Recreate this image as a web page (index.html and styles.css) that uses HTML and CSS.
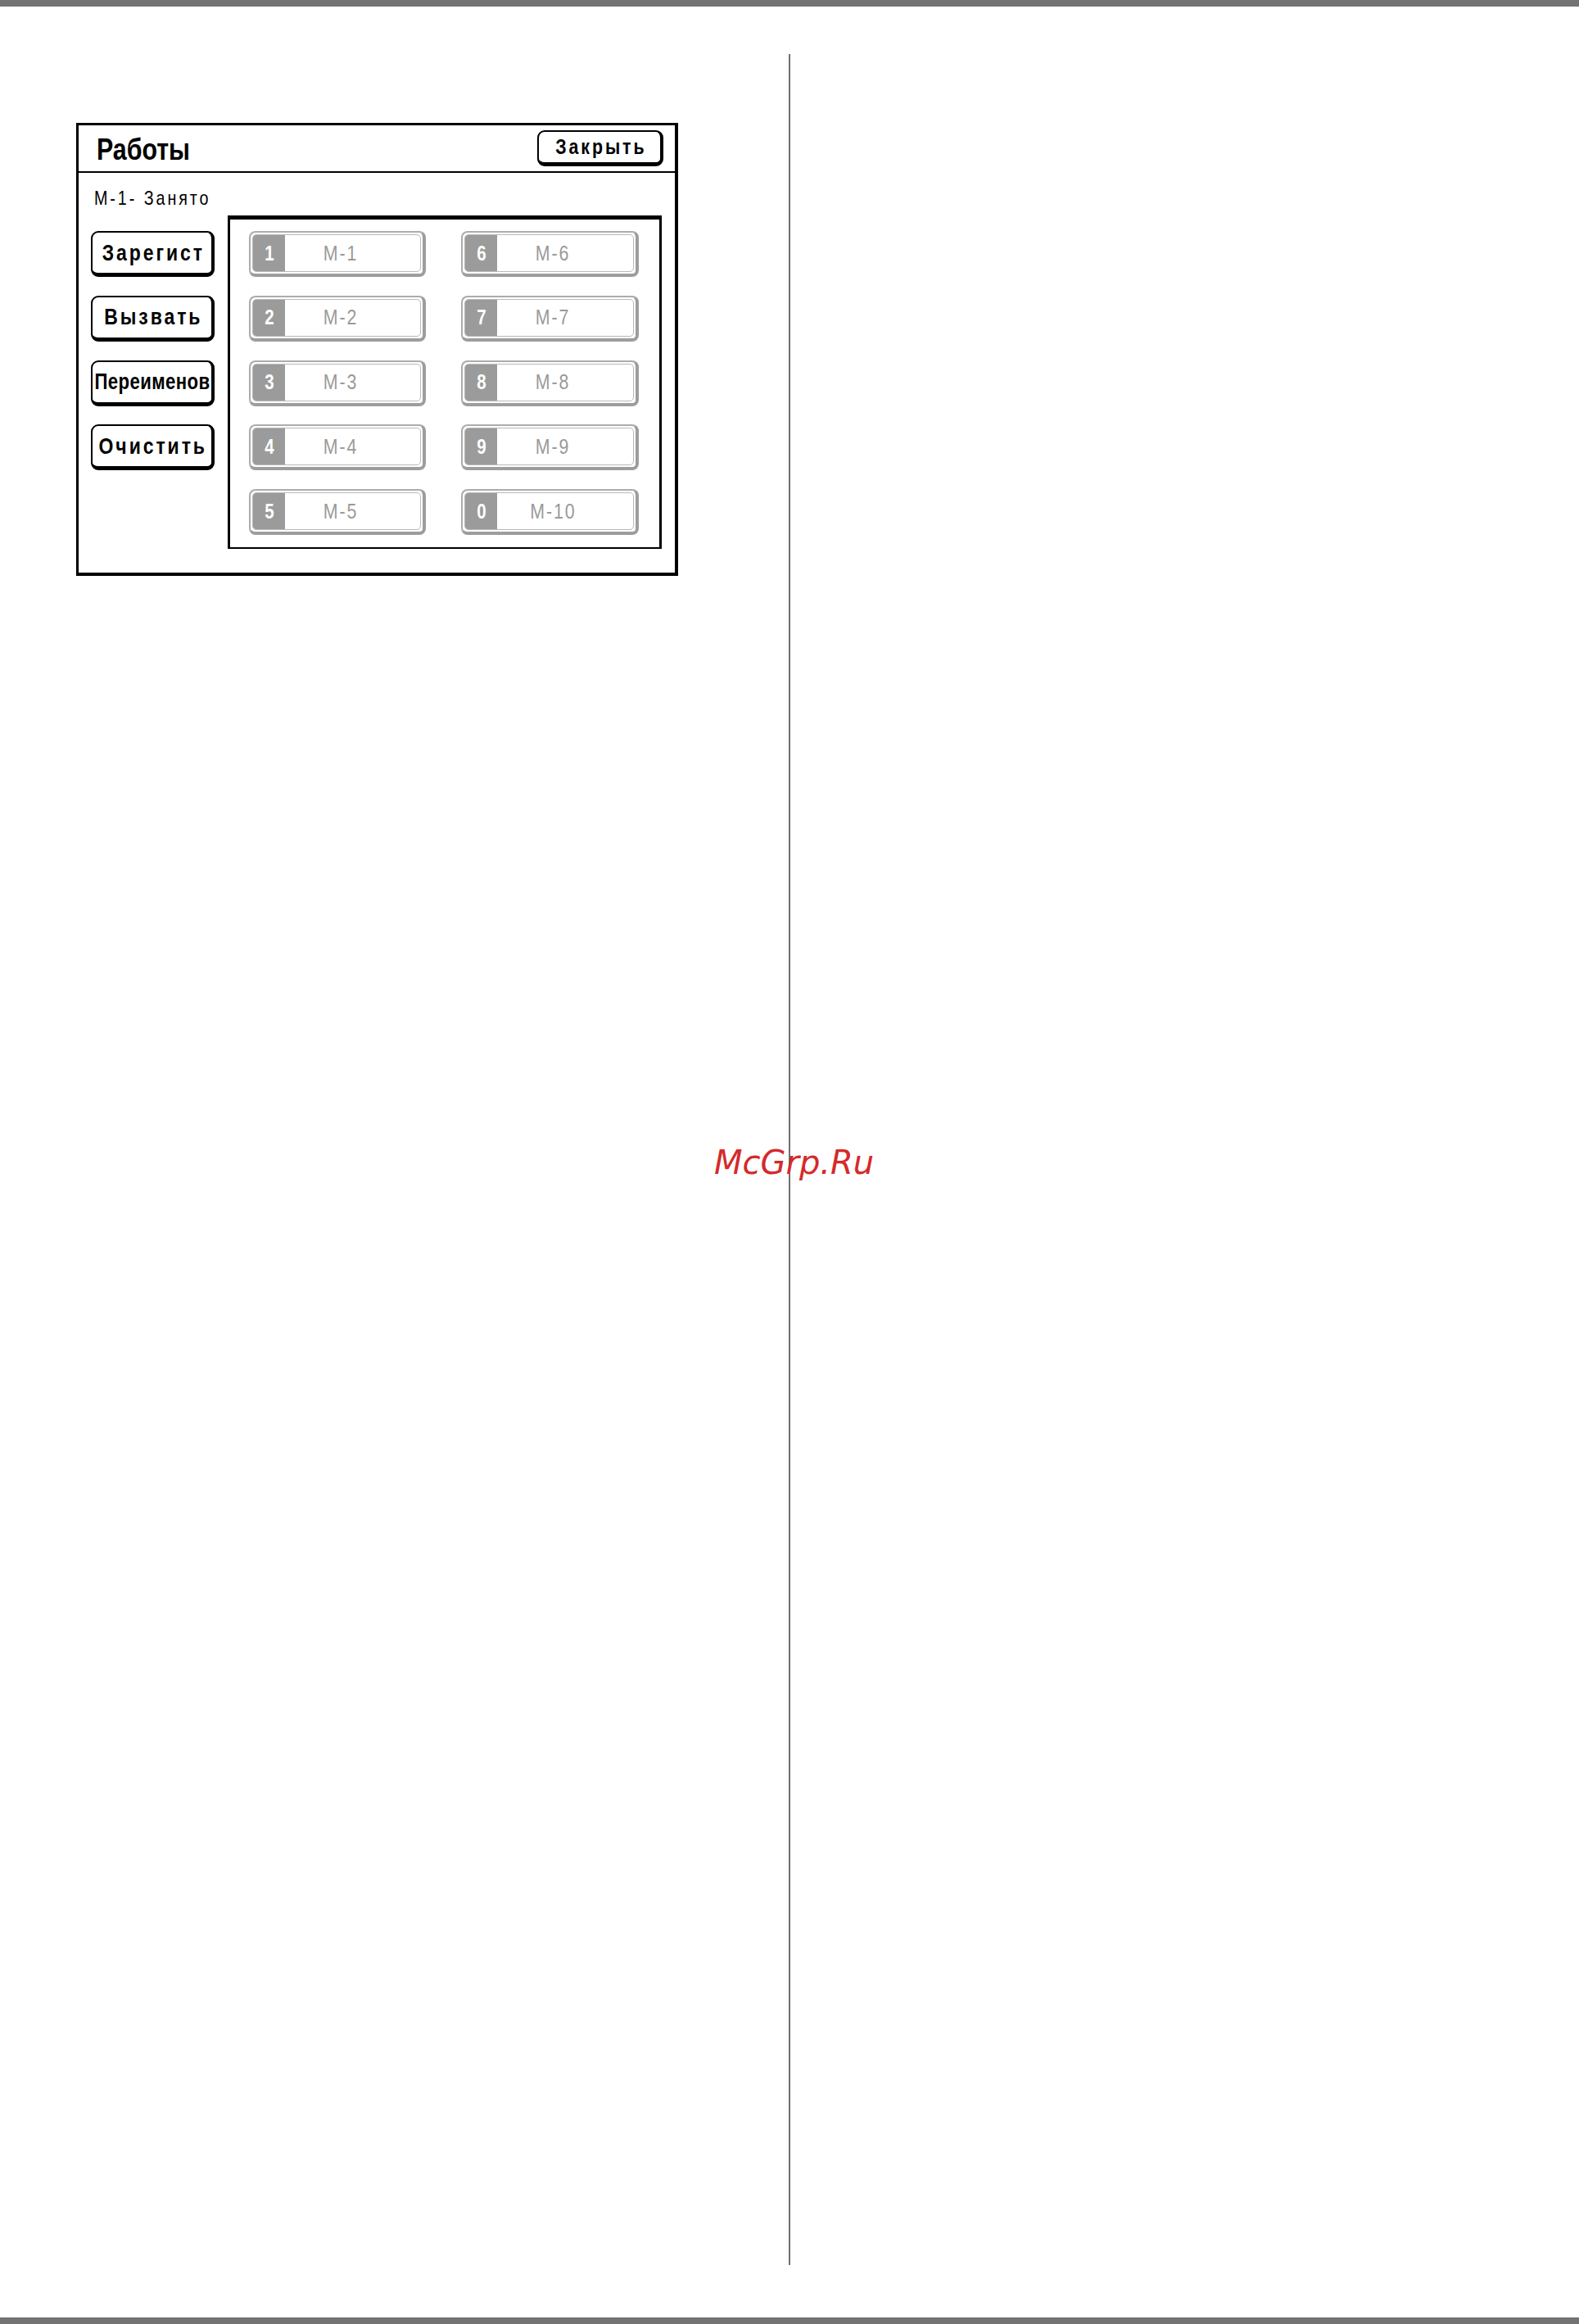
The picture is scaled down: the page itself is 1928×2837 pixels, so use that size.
FILE: index.html
```html
<!DOCTYPE html>
<html lang="ru">
<head>
<meta charset="utf-8">
<title>Работы</title>
<link rel="stylesheet" href="styles.css">
</head>
<body>
<div class="topbar"></div>
<div class="page">
  <div class="leftcol">
    <section class="panel">
      <header class="panel-head">
        <h1 class="title"><span class="sq sq-left">Работы</span></h1>
        <button class="btn btn-close"><span class="sq">Закрыть</span></button>
      </header>
      <div class="status"><span class="sq sq-left">M-1- Занято</span></div>
      <div class="panel-body">
        <div class="actions">
          <button class="btn btn-action"><span class="sq">Зарегист</span></button>
          <button class="btn btn-action"><span class="sq">Вызвать</span></button>
          <button class="btn btn-action btn-tight"><span class="sq">Переименов</span></button>
          <button class="btn btn-action"><span class="sq">Очистить</span></button>
        </div>
        <div class="jobs">
          <div class="job"><div class="job-in"><span class="num"><span class="sq">1</span></span><span class="label"><span class="sq">M-1</span></span></div></div>
          <div class="job"><div class="job-in"><span class="num"><span class="sq">6</span></span><span class="label"><span class="sq">M-6</span></span></div></div>
          <div class="job"><div class="job-in"><span class="num"><span class="sq">2</span></span><span class="label"><span class="sq">M-2</span></span></div></div>
          <div class="job"><div class="job-in"><span class="num"><span class="sq">7</span></span><span class="label"><span class="sq">M-7</span></span></div></div>
          <div class="job"><div class="job-in"><span class="num"><span class="sq">3</span></span><span class="label"><span class="sq">M-3</span></span></div></div>
          <div class="job"><div class="job-in"><span class="num"><span class="sq">8</span></span><span class="label"><span class="sq">M-8</span></span></div></div>
          <div class="job"><div class="job-in"><span class="num"><span class="sq">4</span></span><span class="label"><span class="sq">M-4</span></span></div></div>
          <div class="job"><div class="job-in"><span class="num"><span class="sq">9</span></span><span class="label"><span class="sq">M-9</span></span></div></div>
          <div class="job"><div class="job-in"><span class="num"><span class="sq">5</span></span><span class="label"><span class="sq">M-5</span></span></div></div>
          <div class="job"><div class="job-in"><span class="num"><span class="sq">0</span></span><span class="label"><span class="sq">M-10</span></span></div></div>
        </div>
      </div>
    </section>
  </div>
  <div class="divider"></div>
  <div class="rightcol"></div>
</div>
<div class="bottombar"></div>
<div class="watermark">McGrp.Ru</div>
</body>
</html>
```

FILE: styles.css
```css
* { box-sizing: border-box; }

html, body {
  margin: 0;
  padding: 0;
  background: #ffffff;
}

body {
  width: 1928px;
  height: 2837px;
  position: relative;
  overflow: hidden;
  font-family: "Liberation Sans", Arial, sans-serif;
  color: #000;
}

/* condensed lettering (the original uses a narrow Helvetica) */
.sq {
  display: inline-block;
  white-space: nowrap;
  transform: scaleX(0.82);
  transform-origin: center center;
}

.sq-left {
  transform-origin: left center;
}

.topbar,
.bottombar {
  height: 8px;
  background: #737373;
}

.page {
  display: flex;
  height: 2821px;
}

.leftcol {
  width: 963px;
  flex: none;
}

.divider {
  width: 2px;
  flex: none;
  margin-top: 58px;
  height: 2699px;
  background: #6f6f6f;
}

.rightcol {
  flex: 1;
}

/* Panel */
.panel {
  margin: 142px 0 0 93px;
  width: 735px;
  height: 553px;
  border: 3px solid #000;
  border-right-width: 4px;
  border-bottom-width: 4px;
  display: flex;
  flex-direction: column;
}

.panel-head {
  height: 58px;
  border-bottom: 2px solid #000;
  display: flex;
  justify-content: space-between;
  align-items: flex-start;
  flex: none;
}

.title {
  margin: 11px 0 0 22px;
  font-size: 37px;
  line-height: 37px;
  font-weight: bold;
}

.btn {
  font-family: "Liberation Sans", Arial, sans-serif;
  font-weight: bold;
  color: #000;
  background: #fff;
  border: 2px solid #000;
  border-right-width: 4px;
  border-bottom-width: 5px;
  border-radius: 9px;
  padding: 0;
  display: flex;
  align-items: center;
  justify-content: center;
  white-space: nowrap;
  overflow: visible;
}

.btn-close {
  margin: 6px 14px 0 0;
  width: 154px;
  height: 44px;
  font-size: 26px;
  letter-spacing: 3.6px;
  padding-left: 3px;
}

.status {
  height: 52px;
  flex: none;
  padding: 19px 0 0 19px;
  font-size: 24px;
  line-height: 24px;
  letter-spacing: 3.6px;
}

.panel-body {
  display: flex;
  align-items: flex-start;
  gap: 16px;
  padding: 0 16px 0 15px;
}

.actions {
  width: 151px;
  flex: none;
  display: flex;
  flex-direction: column;
  gap: 22.75px;
  padding-top: 19px;
}

.btn-action {
  width: 151px;
  height: 56px;
  font-size: 28px;
  letter-spacing: 3.6px;
  padding-left: 3px;
}

.btn-tight {
  font-size: 27px;
  letter-spacing: 0.5px;
  padding-left: 0;
}

/* Jobs grid */
.jobs {
  width: 530px;
  height: 407px;
  flex: none;
  border: 3px solid #000;
  border-top-width: 5px;
  border-bottom-width: 2px;
  padding: 14px 25px 15px 23px;
  display: grid;
  grid-template-columns: 216px 217px;
  grid-auto-rows: 56px;
  column-gap: 43px;
  row-gap: 22.75px;
}

.job {
  border: 2px solid #acacac;
  border-right: 4px solid #9d9d9d;
  border-bottom: 4px solid #9d9d9d;
  border-radius: 8px;
  padding: 2px;
  background: #fff;
}

.job-in {
  height: 100%;
  border: 1px solid #b9b9b9;
  border-radius: 5px;
  display: flex;
  overflow: hidden;
}

.num {
  width: 39px;
  flex: none;
  background: #9b9b9b;
  color: #fff;
  font-weight: bold;
  font-size: 25px;
  display: flex;
  align-items: center;
  justify-content: center;
}

.label {
  flex: 1;
  display: flex;
  align-items: center;
  justify-content: center;
  padding-right: 30px;
  color: #9a9a9a;
  font-size: 26px;
  letter-spacing: 2.4px;
}

/* Watermark overlay */
.watermark {
  position: absolute;
  left: 872px;
  top: 1399px;
  font-family: "DejaVu Sans", sans-serif;
  font-style: oblique;
  font-size: 40px;
  line-height: 40px;
  color: #d42a2a;
  white-space: nowrap;
}
```
